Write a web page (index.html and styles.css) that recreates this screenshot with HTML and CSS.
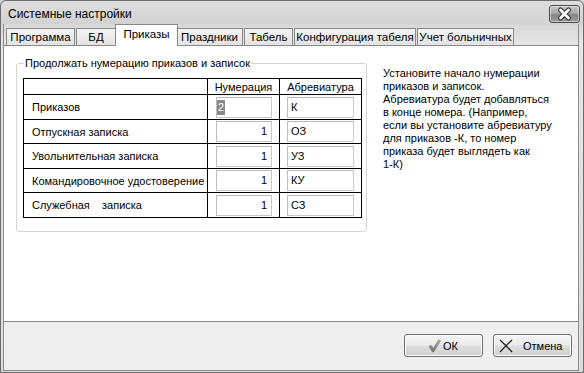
FILE: index.html
```html
<!DOCTYPE html>
<html lang="ru">
<head>
<meta charset="utf-8">
<title>Системные настройки</title>
<link rel="stylesheet" href="styles.css">
</head>
<body>
<div class="window">
  <div class="titlebar">
    <span class="title">Системные настройки</span>
    <button class="close" type="button" aria-label="Закрыть">
      <svg width="29" height="16" viewBox="0 0 29 16">
        <path d="M10.5 4 L18.5 12 M18.5 4 L10.5 12" stroke="#3a3a3a" stroke-width="5" stroke-linecap="round"/>
        <path d="M10.5 4 L18.5 12 M18.5 4 L10.5 12" stroke="#ffffff" stroke-width="2.6" stroke-linecap="round"/>
      </svg>
    </button>
  </div>
  <div class="client">
    <div class="tabs">
      <div class="tab w-prog">Программа</div>
      <div class="tab w-bd">БД</div>
      <div class="tab active">Приказы</div>
      <div class="tab w-hol">Праздники</div>
      <div class="tab w-tab">Табель</div>
      <div class="tab w-conf">Конфигурация табеля</div>
      <div class="tab w-sick">Учет больничных</div>
    </div>
    <div class="panel">
      <fieldset class="group">
        <legend>Продолжать нумерацию приказов и записок</legend>
        <table class="grid">
          <colgroup>
            <col class="c-label">
            <col class="c-num">
            <col class="c-abbr">
          </colgroup>
          <tr class="head">
            <td></td>
            <td class="center">Нумерация</td>
            <td class="center">Абревиатура</td>
          </tr>
          <tr class="r-a">
            <td class="label">Приказов</td>
            <td class="num-cell"><div class="field num editing"><span class="sel">2</span></div></td>
            <td class="abbr-cell"><div class="field abbr">К</div></td>
          </tr>
          <tr class="r-b">
            <td class="label">Отпускная записка</td>
            <td class="num-cell"><div class="field num">1</div></td>
            <td class="abbr-cell"><div class="field abbr">ОЗ</div></td>
          </tr>
          <tr class="r-a">
            <td class="label">Увольнительная записка</td>
            <td class="num-cell"><div class="field num">1</div></td>
            <td class="abbr-cell"><div class="field abbr">УЗ</div></td>
          </tr>
          <tr class="r-b">
            <td class="label">Командировочное удостоверение</td>
            <td class="num-cell"><div class="field num">1</div></td>
            <td class="abbr-cell"><div class="field abbr">КУ</div></td>
          </tr>
          <tr class="r-a">
            <td class="label">Служебная&nbsp;&nbsp;&nbsp; записка</td>
            <td class="num-cell"><div class="field num">1</div></td>
            <td class="abbr-cell"><div class="field abbr">СЗ</div></td>
          </tr>
        </table>
      </fieldset>
      <p class="hint">Установите начало нумерации<br>приказов и записок.<br>Абревиатура будет добавляться<br>в конце номера. (Например,<br>если вы установите абревиатуру<br>для приказов -К, то номер<br>приказа будет выглядеть как<br>1-К)</p>
    </div>
    <div class="footer">
      <button class="btn btn-ok" type="button">
        <svg class="icon" width="16" height="14" viewBox="0 0 16 14">
          <defs>
            <linearGradient id="chk" x1="0" y1="0" x2="0" y2="1">
              <stop offset="0" stop-color="#b4b4b4"/>
              <stop offset="1" stop-color="#6a6a6a"/>
            </linearGradient>
          </defs>
          <path d="M3 7.6 L5.2 6.2 L7.2 9.4 L12.6 0.8 L14.6 1.8 L7.6 13 L6.4 13 Z" fill="url(#chk)" stroke="#7a7a7a" stroke-width="0.5"/>
        </svg>
        <span>ОК</span>
      </button>
      <button class="btn btn-cancel" type="button">
        <svg class="icon" width="16" height="14" viewBox="0 0 16 14">
          <path d="M2 1 Q8 6.5 14 13 M14 1 Q8 6.5 2 13" stroke="#1e1e1e" stroke-width="1.3" fill="none"/>
        </svg>
        <span>Отмена</span>
      </button>
    </div>
  </div>
</div>
</body>
</html>
```
FILE: styles.css
```css
* {
  box-sizing: border-box;
}

html,
body {
  margin: 0;
  padding: 0;
}

body {
  width: 584px;
  height: 373px;
  overflow: hidden;
  background: #d6d6d6;
  font-family: "Liberation Sans", Arial, sans-serif;
  font-size: 11px;
  color: #000;
}

.window {
  width: 584px;
  height: 373px;
  border: 1px solid #6c6c6c;
  border-radius: 6px 6px 0 0;
  background: linear-gradient(#dedede 0, #d2d2d2 23px, #d8d8d8 24px, #e6e6e6 45px, #dcdcdc 100%);
  padding: 0 4px 1px 2px;
  display: flex;
  flex-direction: column;
}

.titlebar {
  height: 23px;
  display: flex;
  align-items: center;
  justify-content: space-between;
  padding-left: 5px;
}

.title {
  font-size: 12px;
  color: #000;
  padding-top: 3px;
}

.close {
  width: 31px;
  height: 18px;
  margin: 3px -1px 0 0;
  padding: 0;
  border: 1px solid #4c4c4c;
  border-radius: 3px;
  background: linear-gradient(#c8c8c8 0%, #a8a8a8 45%, #858585 55%, #9c9c9c 100%);
  box-shadow: inset 0 0 0 1px rgba(255, 255, 255, 0.45);
  display: flex;
  align-items: center;
  justify-content: center;
}

.close svg {
  display: block;
}

.client {
  flex: 1;
  border: 1px solid #8a8a8a;
  border-top: 0;
  display: flex;
  flex-direction: column;
}

.tabs {
  height: 21px;
  display: flex;
  align-items: flex-end;
  padding-left: 2px;
}

.tab {
  height: 17px;
  border: 1px solid #898989;
  border-bottom: 0;
  background: linear-gradient(#f4f4f4, #e2e2e2);
  margin-right: 1px;
  text-align: center;
  font-size: 11.5px;
  line-height: 16px;
  white-space: nowrap;
  overflow: hidden;
}

.w-prog { width: 69px; }
.w-bd { width: 40px; }
.w-hol { width: 67px; }
.w-tab { width: 49px; }
.w-conf { width: 122px; }
.w-sick { width: 97px; }

.tab.active {
  width: 63px;
  height: 22px;
  background: #fff;
  margin: 0 -2px -1px -2px;
  line-height: 19px;
  position: relative;
  z-index: 1;
}

.panel {
  height: 277px;
  background: #fff;
  border-top: 1px solid #898989;
  border-bottom: 1px solid #898989;
  display: flex;
  align-items: flex-start;
}

.group {
  margin: 11px 0 0 12px;
  width: 351px;
  padding: 0 5px 13px 6px;
  border: 1px solid #d4d4d4;
  border-radius: 3px;
  min-width: 0;
}

.group legend {
  margin-left: 1px;
  padding: 0 1px;
  font-size: 11px;
  line-height: 13px;
}

.grid {
  margin-top: 8px;
  border-collapse: collapse;
  table-layout: fixed;
  width: 338px;
  border: 1px solid #000;
}

.c-label { width: 184px; }
.c-num { width: 72px; }
.c-abbr { width: 82px; }

.grid td {
  border: 1px solid #000;
  padding: 0;
  vertical-align: middle;
  white-space: nowrap;
  overflow: hidden;
}

.grid .head td {
  height: 16px;
  line-height: 14px;
}

.grid .r-a td {
  height: 25px;
}

.grid .r-b td {
  height: 24px;
}

.center {
  text-align: center;
}

.label {
  padding-left: 8px !important;
}

.num-cell {
  padding: 0 7px 0 8px !important;
}

.abbr-cell {
  padding: 0 7px 0 7px !important;
}

.field {
  height: 21px;
  border: 1px solid #c9c9c9;
  border-top-color: #b9b9b9;
  border-left-color: #bdbdbd;
  background: #fff;
  line-height: 19px;
  display: flex;
  align-items: center;
}

.field.num {
  justify-content: flex-end;
  padding-right: 4px;
}

.field.num.editing {
  justify-content: flex-start;
  padding: 0;
}

.field.abbr {
  padding-left: 3px;
}

.sel {
  display: inline-block;
  background: #8a8a8a;
  color: #fff;
  line-height: 15px;
  padding: 0 1px;
}

.hint {
  margin: 21px 0 0 16px;
  font-size: 11px;
  line-height: 13px;
  white-space: nowrap;
}

.footer {
  flex: 1;
  background: #efefef;
  display: flex;
  justify-content: flex-end;
  align-items: flex-start;
  gap: 10px;
  padding: 12px 6px 0 0;
}

.btn {
  width: 79px;
  height: 23px;
  border: 1px solid #707070;
  border-radius: 3px;
  background: linear-gradient(#f4f4f4 0%, #ebebeb 48%, #dddddd 52%, #d0d0d0 100%);
  box-shadow: inset 0 0 0 1px #fbfbfb;
  font-family: "Liberation Sans", Arial, sans-serif;
  font-size: 11px;
  color: #000;
  display: flex;
  align-items: center;
  padding: 0;
}

.btn .icon {
  display: block;
  flex: none;
}

.btn-ok {
  padding-left: 21px;
  gap: 1px;
}

.btn-cancel {
  padding-left: 4px;
  gap: 9px;
}
```
